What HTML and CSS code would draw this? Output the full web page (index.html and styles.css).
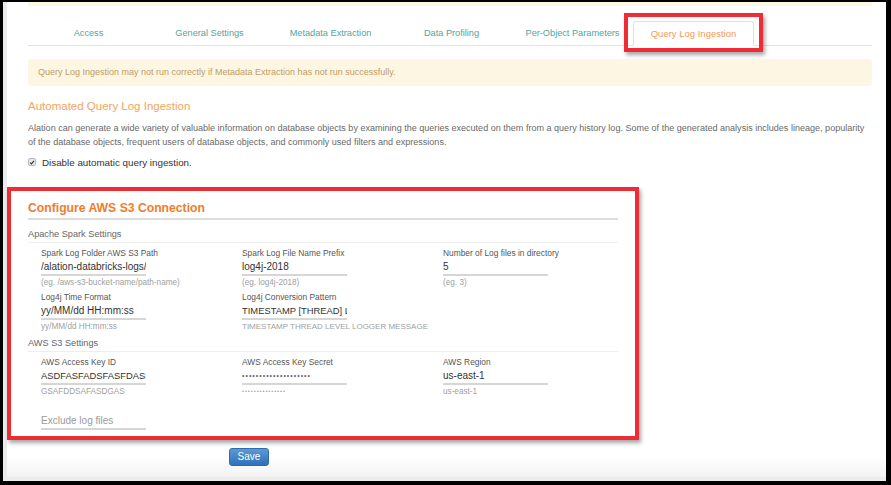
FILE: index.html
```html
<!DOCTYPE html>
<html>
<head>
<meta charset="utf-8">
<link rel="stylesheet" href="styles.css">
</head>
<body>
<div class="screen">
  <div class="content">
    <div class="topstrip"></div>
    <nav class="tabs">
      <div class="tab">Access</div>
      <div class="tab">General Settings</div>
      <div class="tab">Metadata Extraction</div>
      <div class="tab">Data Profiling</div>
      <div class="tab">Per-Object Parameters</div>
      <div class="tab active">Query Log Ingestion</div>
    </nav>
    <div class="alert">Query Log Ingestion may not run correctly if Metadata Extraction has not run successfully.</div>
    <h2 class="title">Automated Query Log Ingestion</h2>
    <p class="desc">Alation can generate a wide variety of valuable information on database objects by examining the queries executed on them from a query history log. Some of the generated analysis includes lineage, popularity of the database objects, frequent users of database objects, and commonly used filters and expressions.</p>
    <label class="check"><span class="box"><svg width="7" height="7" viewBox="0 0 7 7"><path d="M1.3 3.6 L2.9 5.2 L5.8 1.6" fill="none" stroke="#333" stroke-width="1.3"/></svg></span>Disable automatic query ingestion.</label>

    <section class="s3">
      <h3 class="s3-title">Configure AWS S3 Connection</h3>
      <h4 class="sub">Apache Spark Settings</h4>
      <div class="grid">
        <div class="field">
          <div class="lbl">Spark Log Folder AWS S3 Path</div>
          <div class="inp">/alation-databricks-logs/</div>
          <div class="help">(eg. /aws-s3-bucket-name/path-name)</div>
        </div>
        <div class="field">
          <div class="lbl">Spark Log File Name Prefix</div>
          <div class="inp">log4j-2018</div>
          <div class="help">(eg. log4j-2018)</div>
        </div>
        <div class="field">
          <div class="lbl">Number of Log files in directory</div>
          <div class="inp">5</div>
          <div class="help">(eg. 3)</div>
        </div>
        <div class="field">
          <div class="lbl">Log4j Time Format</div>
          <div class="inp">yy/MM/dd HH:mm:ss</div>
          <div class="help">yy/MM/dd HH:mm:ss</div>
        </div>
        <div class="field">
          <div class="lbl">Log4j Conversion Pattern</div>
          <div class="inp upper">TIMESTAMP [THREAD] LEVEL LOGGER MESSAGE</div>
          <div class="help upper">TIMESTAMP THREAD LEVEL LOGGER MESSAGE</div>
        </div>
      </div>
      <h4 class="sub">AWS S3 Settings</h4>
      <div class="grid">
        <div class="field">
          <div class="lbl">AWS Access Key ID</div>
          <div class="inp upper">ASDFASFADSFASFDASFDSA</div>
          <div class="help">GSAFDDSAFASDGAS</div>
        </div>
        <div class="field">
          <div class="lbl">AWS Access Key Secret</div>
          <div class="inp dots">••••••••••••••••••••</div>
          <div class="help dots-sm">•••••••••••••••</div>
        </div>
        <div class="field">
          <div class="lbl">AWS Region</div>
          <div class="inp">us-east-1</div>
          <div class="help">us-east-1</div>
        </div>
      </div>
      <div class="exclude">
        <div class="inp placeholder">Exclude log files</div>
      </div>
    </section>
    <div class="actions"><button class="save">Save</button></div>
  </div>
  <div class="mark mark-tab"></div>
  <div class="mark mark-s3"></div>
</div>
</body>
</html>
```

FILE: styles.css
```css
* { box-sizing: border-box; }
html, body { margin: 0; padding: 0; }
body {
  background: #000;
  width: 891px;
  height: 485px;
  overflow: hidden;
  font-family: "Liberation Sans", Arial, sans-serif;
}
.screen {
  position: relative;
  margin: 2px 5px 0 3px;
  width: 883px;
  height: 479px;
  border-left: 4px solid #ebebeb;
  border-bottom: 4px solid #ececec;
  background: linear-gradient(#fff 0, #fff 455px, #f3f3f3 475px);
}
.content {
  padding: 0 14px 0 21px;
}
.topstrip {
  height: 4px;
  background: #fcf8e3;
}
.tabs {
  display: flex;
  margin-top: 15px;
  border-bottom: 1px solid #e3e3e3;
}
.tab {
  width: 121px;
  height: 24px;
  line-height: 24px;
  text-align: center;
  font-size: 9.2px;
  color: #4fa6a0;
}
.tab.active {
  color: #f49a52;
  font-size: 9.5px;
  background: #fff;
  border: 1px solid #e0e0e0;
  border-bottom-color: #fff;
  margin-bottom: -1px;
  height: 25px;
  line-height: 23px;
  border-radius: 3px 3px 0 0;
}
.alert {
  margin-top: 13px;
  height: 27px;
  line-height: 27px;
  padding: 0 10px;
  background: #fcf6e3;
  border-radius: 3px;
  color: #c29c63;
  font-size: 9px;
}
.title {
  margin: 12px 0 0;
  font-size: 11.5px;
  line-height: 16px;
  font-weight: normal;
  color: #f5a45e;
}
.desc {
  margin: 7px 0 0;
  padding-right: 6px;
  font-size: 9.05px;
  line-height: 14px;
  color: #6a6a6a;
}
.check {
  display: flex;
  align-items: center;
  margin-top: 6px;
  height: 14px;
  font-size: 9.8px;
  color: #333;
}
.box {
  width: 8px;
  height: 8px;
  margin-right: 6px;
  border: 1px solid #b8b8b8;
  border-radius: 2px;
  background: #e8e8e8;
  display: flex;
  align-items: center;
  justify-content: center;
}
.s3 {
  width: 590px;
  margin-top: 31px;
}
.s3-title {
  margin: 0;
  font-size: 12.2px;
  line-height: 16px;
  padding-bottom: 2px;
  border-bottom: 2px solid #dcdcdc;
  color: #f07d2a;
  font-weight: bold;
}
.sub {
  margin: 8px 0 0;
  font-size: 9.2px;
  line-height: 12px;
  font-weight: normal;
  color: #666;
  padding-bottom: 2px;
  border-bottom: 1px solid #eeeeee;
}
.sub + .grid { margin-top: 4px; }
.s3-title + .sub { margin-top: 8px; }
.grid + .sub { margin-top: 4px; }
.grid {
  display: grid;
  grid-template-columns: repeat(3, 201px);
  row-gap: 2px;
  padding-left: 13px;
}
.field { width: 105px; }
.lbl {
  font-size: 8.4px;
  line-height: 12px;
  color: #555;
  white-space: nowrap;
}
.inp {
  height: 17px;
  line-height: 15px;
  font-size: 10px;
  color: #333;
  border-bottom: 2px solid #d6d6d6;
  white-space: nowrap;
  overflow: hidden;
}
.inp.upper { font-size: 9.4px; }
.inp.dots {
  font-size: 7px;
  letter-spacing: 1px;
  color: #666;
}
.help {
  font-size: 8.2px;
  line-height: 13px;
  color: #a0a0a0;
  white-space: nowrap;
}
.help.upper { font-size: 8px; }
.help.dots-sm {
  font-size: 5.5px;
  letter-spacing: 1px;
}
.exclude {
  margin-top: 15px;
  padding-left: 13px;
}
.exclude .inp { width: 105px; }
.inp.placeholder { color: #9a9a9a; }
.actions {
  margin-top: 16px;
  padding-left: 201px;
}
.save {
  width: 40px;
  height: 18px;
  padding: 0;
  border: 1px solid #2f6aab;
  border-radius: 3px;
  background: linear-gradient(#5c9ad6, #2f70b8);
  color: #fff;
  font-family: "Liberation Sans", Arial, sans-serif;
  font-size: 10px;
}
.mark {
  position: absolute;
  border: 4px solid #ef2b33;
  box-shadow: 2px 3px 4px rgba(0, 0, 0, 0.35);
}
.mark-tab {
  left: 617px;
  top: 11px;
  width: 139px;
  height: 39px;
}
.mark-s3 {
  left: 0;
  top: 185px;
  width: 632px;
  height: 253px;
}
```
